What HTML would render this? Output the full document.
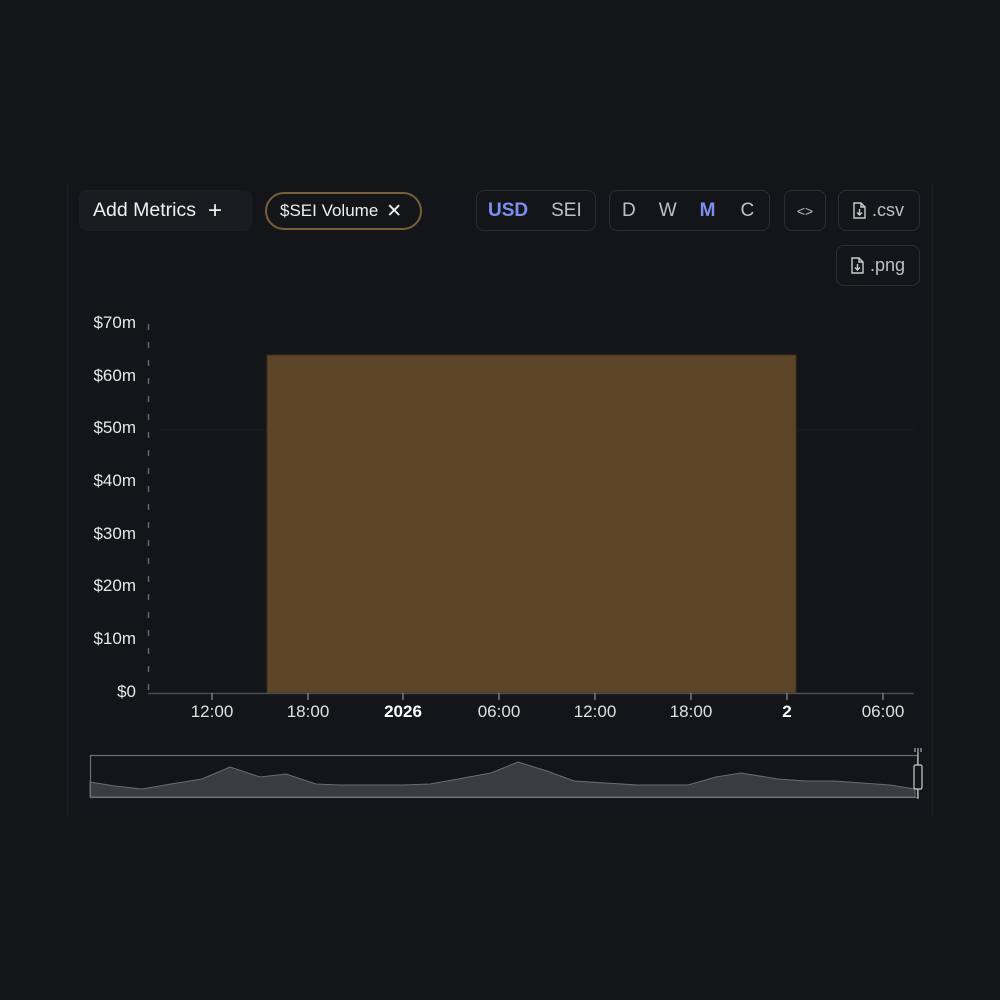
<!DOCTYPE html>
<html><head><meta charset="utf-8"><style>
*{margin:0;padding:0;box-sizing:border-box}
body{width:1000px;height:1000px;background:#141517;font-family:"Liberation Sans",sans-serif;position:relative;overflow:hidden;color:#e6e6e6}
.card{position:absolute;left:67px;top:183px;width:866px;height:632px;background:#141518;border-left:1px solid #1c1d20;border-right:1px solid #1c1d20}
.b{position:absolute;border:1px solid #2c2e33;border-radius:8px;display:flex;align-items:center;font-size:19px;color:#bfc0c3}
.lbl{position:absolute;font-size:17px;color:#e8e8e8;text-align:right;width:60px}
.xl{position:absolute;font-size:17px;color:#e0e0e0;transform:translateX(-50%);top:702px}
</style></head><body>
<div class="card"></div>
<div class="b" style="left:79px;top:190px;width:173px;height:41px;background:#1a1b1e;border-color:#1d1e21;padding-left:13px;color:#f0f0f0;font-size:19.5px">Add Metrics<span style="margin-left:12px;font-size:24px;font-weight:300">+</span></div>
<div class="b" style="left:265px;top:192px;width:157px;height:38px;border:2px solid #7a5e3a;border-radius:20px;padding-left:13px;color:#eee;font-size:17px">$SEI Volume<span style="margin-left:8px;font-size:19px">✕</span></div>
<div class="b" style="left:476px;top:190px;width:120px;height:41px"><span style="margin-left:11px;color:#7b8ff0;font-weight:bold">USD</span><span style="margin-left:23px">SEI</span></div>
<div class="b" style="left:609px;top:190px;width:161px;height:41px"><span style="margin-left:12px">D</span><span style="margin-left:23px">W</span><span style="margin-left:23px;color:#7b8ff0;font-weight:bold">M</span><span style="margin-left:25px">C</span></div>
<div class="b" style="left:784px;top:190px;width:42px;height:41px;justify-content:center;font-size:14px">&lt;&gt;</div>
<div class="b" style="left:838px;top:190px;width:82px;height:41px;padding-left:13px;font-size:18px"><svg width="14" height="17" viewBox="0 0 14 17" style="margin-right:6px"><path d="M2 1h7l4 4v11H2z M9 1v4h4 M7.5 7v6 M5 10.5l2.5 2.5 2.5-2.5" fill="none" stroke="#ccc" stroke-width="1.4"/></svg>.csv</div>
<div class="b" style="left:836px;top:245px;width:84px;height:41px;padding-left:13px;font-size:18px"><svg width="14" height="17" viewBox="0 0 14 17" style="margin-right:6px"><path d="M2 1h7l4 4v11H2z M9 1v4h4 M7.5 7v6 M5 10.5l2.5 2.5 2.5-2.5" fill="none" stroke="#ccc" stroke-width="1.4"/></svg>.png</div>
<div class="lbl" style="left:76px;top:313px">$70m</div>
<div class="lbl" style="left:76px;top:366px">$60m</div>
<div class="lbl" style="left:76px;top:418px">$50m</div>
<div class="lbl" style="left:76px;top:471px">$40m</div>
<div class="lbl" style="left:76px;top:524px">$30m</div>
<div class="lbl" style="left:76px;top:576px">$20m</div>
<div class="lbl" style="left:76px;top:629px">$10m</div>
<div class="lbl" style="left:76px;top:682px">$0</div>
<svg style="position:absolute;left:0;top:0" width="1000" height="1000">
<line x1="148.5" y1="324" x2="148.5" y2="693" stroke="#666" stroke-dasharray="6,12" stroke-width="1.5"/>
<line x1="160" y1="430" x2="914" y2="430" stroke="#1d1e21"/>
<rect x="267" y="355" width="529" height="338" fill="#5c4526" stroke="#3d2f1c"/>
<line x1="148" y1="693.5" x2="914" y2="693.5" stroke="#4a4b4f" stroke-width="1.5"/>
<g stroke="#888" stroke-width="1.3"><line x1="212" y1="693" x2="212" y2="700"/><line x1="308" y1="693" x2="308" y2="700"/><line x1="403" y1="693" x2="403" y2="700"/><line x1="499" y1="693" x2="499" y2="700"/><line x1="595" y1="693" x2="595" y2="700"/><line x1="691" y1="693" x2="691" y2="700"/><line x1="787" y1="693" x2="787" y2="700"/><line x1="883" y1="693" x2="883" y2="700"/></g>
<polygon points="90,782 115,786 142,789 171,784 202,779 230,767 260,777 286,774 316,784 340,785 402,785 430,784 458,779 491,773 518,762 547,771 574,781 637,785 688,785 716,777 741,773 778,779 806,781 834,781 890,785 915,789 915,797 90,797" fill="#3a3c42" stroke="#6a6c72" stroke-width="1"/>
<rect x="90.5" y="755.5" width="827" height="42" fill="none" stroke="#6d6f75" stroke-width="1.2"/>
<line x1="918" y1="752" x2="918" y2="799" stroke="#bbb" stroke-width="1.3"/>
<rect x="914" y="765" width="8" height="24" rx="1.5" fill="#141517" stroke="#ccc" stroke-width="1.2"/>
<g stroke="#ccc"><line x1="915" y1="748" x2="915" y2="752"/><line x1="918" y1="748" x2="918" y2="752"/><line x1="921" y1="748" x2="921" y2="752"/></g>
</svg>
<div class="xl" style="left:212px">12:00</div>
<div class="xl" style="left:308px">18:00</div>
<div class="xl" style="left:403px;font-weight:bold;color:#fff">2026</div>
<div class="xl" style="left:499px">06:00</div>
<div class="xl" style="left:595px">12:00</div>
<div class="xl" style="left:691px">18:00</div>
<div class="xl" style="left:787px;font-weight:bold;color:#fff">2</div>
<div class="xl" style="left:883px">06:00</div>
</body></html>
